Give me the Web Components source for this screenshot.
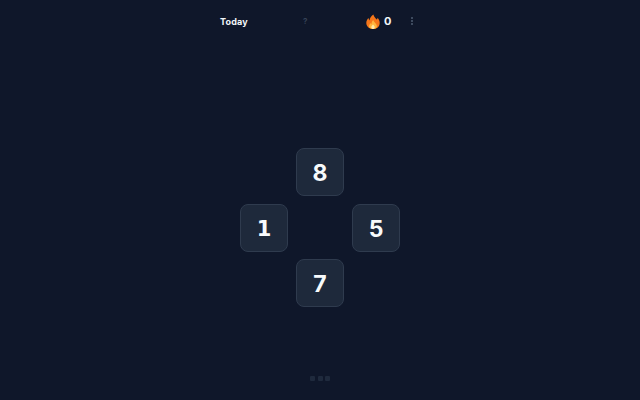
<!DOCTYPE html>
<html lang="en">
<head>
<meta charset="utf-8">
<title>Today</title>
<style>
  html, body { margin: 0; height: 100%; background: #0f172a; }
  body { font-family: Inter, "Liberation Sans", sans-serif; color: #f1f5f9; overflow: hidden; }
</style>
</head>
<body>
<game-app>
  <top-bar></top-bar>
  <number-cross></number-cross>
  <page-dots></page-dots>
</game-app>
<script>
  class GameApp extends HTMLElement {
    constructor() {
      super();
      this.attachShadow({ mode: 'open' });
      this.shadowRoot.innerHTML = `
        <style>
          :host { display: flex; flex-direction: column; align-items: center; height: 400px; }
        </style>
        <slot></slot>
      `;
    }
  }

  class TopBar extends HTMLElement {
    constructor() {
      super();
      this.attachShadow({ mode: 'open' });
      this.shadowRoot.innerHTML = `
        <style>
          :host { display: flex; align-items: center; width: 200px; height: 42px; flex: none; font-weight: 700; }
          .today { width: 83px; font-size: 9px; letter-spacing: .2px; color: #f1f5f9; }
          .help { width: 63px; font-size: 8px; color: #364256; }
          .streak { display: flex; align-items: center; gap: 4px; width: 45px; font-size: 11px; }
          .streak svg { width: 14px; height: 15px; display: block; }
          .more { display: flex; flex-direction: column; gap: 1.5px; }
          .more i { width: 1.5px; height: 1.5px; border-radius: 50%; background: #475569; }
        </style>
        <span class="today">Today</span>
        <span class="help">?</span>
        <span class="streak">
          <svg viewBox="0 0 14 15">
            <path fill="#f5761a" d="M7.4.4c.5 2.400 2 3.400 3.400 5 .5-.5.7-1 .8-1.700 1.400 1.600 2.100 3.300 2.100 5.200C13.700 12.500 10.900 15 7 15S.3 12.500.3 9.100c0-2 .9-3.600 2.200-5 .1 1 .4 1.700 1 2.300C3.700 4 5.100 1.900 7.400.4z"/>
            <path fill="#ffb63d" d="M7.300 6c.3 1.500 1.300 2.100 2.200 3.200.9 1 1.400 2 1.400 3 0 1.700-1.700 2.800-3.900 2.800s-3.900-1.100-3.900-2.800c0-1.300.8-2.400 1.600-3.200.1.600.3 1 .7 1.300C5.500 8.300 6.200 7 7.300 6z"/>
            <path fill="#ffe9a8" d="M7 10.500c.9.900 1.700 1.600 1.700 2.700 0 1-.7 1.800-1.700 1.800s-1.700-.8-1.700-1.800c0-1.100.9-1.800 1.700-2.700z"/>
          </svg>
          <span>0</span>
        </span>
        <span class="more"><i></i><i></i><i></i></span>
      `;
    }
  }

  class NumberTile extends HTMLElement {
    constructor() {
      super();
      this.attachShadow({ mode: 'open' });
      this.shadowRoot.innerHTML = `
        <style>
          :host {
            display: flex; align-items: center; justify-content: center;
            box-sizing: border-box; width: 48px; height: 48px; padding-top: 2px;
            background: #1e293b; border: 1px solid #2f3b4e; border-radius: 8px;
            font-size: 23px; font-weight: 700; color: #f8fafc;
          }
        </style>
        <slot></slot>
      `;
    }
  }

  class NumberCross extends HTMLElement {
    constructor() {
      super();
      this.attachShadow({ mode: 'open' });
      this.shadowRoot.innerHTML = `
        <style>
          :host {
            flex: 1; display: flex; align-items: center; justify-content: center;
            padding-top: 41px;
          }
          .grid { display: grid; grid-template-columns: repeat(3, 48px); grid-auto-rows: 48px; gap: 7.5px 8px; }
          .n { grid-column: 2; grid-row: 1; }
          .w { grid-column: 1; grid-row: 2; font-family: "DejaVu Sans", sans-serif; font-size: 21px; }
          .e { grid-column: 3; grid-row: 2; }
          .s { grid-column: 2; grid-row: 3; }
        </style>
        <div class="grid">
          <number-tile class="n">8</number-tile>
          <number-tile class="w">1</number-tile>
          <number-tile class="e">5</number-tile>
          <number-tile class="s">7</number-tile>
        </div>
      `;
    }
  }

  class PageDots extends HTMLElement {
    constructor() {
      super();
      this.attachShadow({ mode: 'open' });
      this.shadowRoot.innerHTML = `
        <style>
          :host { display: flex; gap: 2.5px; height: 24px; padding-top: 4px; flex: none; }
          i { width: 5px; height: 5px; border-radius: 1px; background: #1f2a3d; }
        </style>
        <i></i><i></i><i></i>
      `;
    }
  }

  customElements.define('game-app', GameApp);
  customElements.define('top-bar', TopBar);
  customElements.define('number-tile', NumberTile);
  customElements.define('number-cross', NumberCross);
  customElements.define('page-dots', PageDots);
</script>
</body>
</html>
